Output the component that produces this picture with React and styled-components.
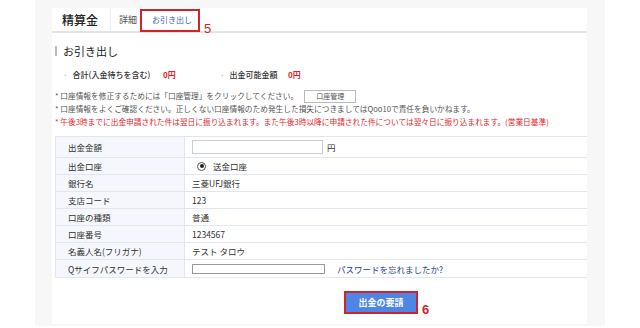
import styled, { createGlobalStyle } from 'styled-components'

const GlobalStyle = createGlobalStyle`
  body {
    margin: 0;
    background: #fff;
    font-family: "Noto Sans CJK JP", "Liberation Sans", sans-serif;
    color: #333;
  }
`;

const Page = styled.div`
  padding: 0 35px;
  width: 640px;
  height: 328px;
  box-sizing: border-box;
`;

const Outer = styled.div`
  background: #f7f7f7;
  padding: 8px 18px 2px 17px;
  height: 326px;
  box-sizing: border-box;
`;

const Panel = styled.div`
  background: #fff;
  height: 100%;
  display: flex;
  flex-direction: column;
`;

const TabBar = styled.div`
  display: flex;
  align-items: stretch;
  height: 23px;
  border-bottom: 2px solid #e4e4e4;
  padding-left: 10px;
`;

const Title = styled.div`
  font-size: 12px;
  font-weight: 500;
  color: #222;
  line-height: 23px;
  padding-right: 12px;
  border-right: 1px solid #eee;
`;

const Tab = styled.div`
  font-size: ${p => (p.$active ? 8 : 9)}px;
  line-height: 23px;
  padding: 0 7px 0 8px;
  color: ${p => (p.$active ? '#3a64c8' : '#555')};
  position: relative;
`;

const Mark = styled.div`
  position: absolute;
  border: 2px solid #d2232a;
  left: ${p => p.$l}px;
  top: ${p => p.$t}px;
  width: ${p => p.$w}px;
  height: ${p => p.$h}px;
  box-sizing: border-box;
`;

const MarkNum = styled.span`
  position: absolute;
  color: #d2232a;
  font-family: "Liberation Sans", sans-serif;
  font-size: 13px;
  left: ${p => p.$l}px;
  top: ${p => p.$t}px;
`;

const Body = styled.div`
  padding: 10px 0 0 3px;
  display: flex;
  flex-direction: column;
  flex: 1;
`;

const Section = styled.div`
  display: flex;
  align-items: center;
  gap: 6px;
  font-size: 11px;
  color: #222;
  height: 16px;
  &::before {
    content: '';
    width: 2px;
    height: 10px;
    background: #bbb;
  }
`;

const Summary = styled.div`
  display: flex;
  align-items: center;
  margin: 8px 0 0 8px;
  font-size: 8px;
  font-weight: 500;
  height: 14px;
  color: #333;
  white-space: nowrap;
`;

const SumLabel = styled.span`
  width: ${p => p.$w}px;
  flex: none;
  &::before {
    content: '·';
    color: #aaa;
    margin-right: 5px;
  }
`;

const Red = styled.span`
  color: #e0252a;
  font-weight: 700;
  width: ${p => p.$w}px;
`;

const Notes = styled.div`
  margin-top: 9px;
  font-size: 7.7px;
  color: #555;
  line-height: 12.5px;
`;

const Note = styled.div`
  display: flex;
  align-items: center;
  color: ${p => (p.$red ? '#e3262b' : '#555')};
`;

const SmallBtn = styled.span`
  display: inline-block;
  margin-left: 6px;
  border: 1px solid #bbb;
  background: #fff;
  font-size: 7px;
  padding: 0 10px;
  height: 11px;
  line-height: 11px;
  width: 30px;
  text-align: center;
`;

const Table = styled.div`
  margin-top: 8px;
  display: grid;
  grid-template-columns: 130px 1fr;
  border-top: 1px solid #e2e6f0;
  font-size: 8.5px;
`;

const Label = styled.div`
  background: #f5f7fc;
  padding-left: 12px;
  display: flex;
  align-items: center;
  height: ${p => p.$h || 16}px;
  border-bottom: 1px solid #e2e6f0;
  border-left: 1px solid #e2e6f0;
  border-right: 1px solid #e2e6f0;
  color: #333;
`;

const Value = styled.div`
  padding-left: 7px;
  display: flex;
  align-items: center;
  gap: 4px;
  height: ${p => p.$h || 16}px;
  border-bottom: 1px solid #e2e6f0;
  color: #333;
`;

const Input = styled.div`
  width: ${p => p.$w}px;
  height: ${p => p.$ih}px;
  border: 1px solid ${p => p.$dark ? '#999' : '#c8cdd6'};
  box-sizing: border-box;
  background: #fff;
`;

const Radio = styled.span`
  width: 9px;
  height: 9px;
  border: 1px solid #555;
  border-radius: 50%;
  box-sizing: border-box;
  display: inline-flex;
  align-items: center;
  justify-content: center;
  margin: 0 3px 0 5px;
  &::after {
    content: '';
    width: 4px;
    height: 4px;
    border-radius: 50%;
    background: #222;
  }
`;

const Link = styled.span`
  color: #2b3d9e;
  margin-left: 8px;
`;

const Footer = styled.div`
  display: flex;
  justify-content: center;
  padding-top: 13px;
  padding-left: 120px;
`;

const Submit = styled.div`
  position: relative;
  width: 74px;
  height: 23px;
  background: #4f86e6;
  border: 2px solid #d2232a;
  box-sizing: border-box;
  color: #fff;
  font-size: 9px;
  font-weight: 700;
  display: flex;
  align-items: center;
  justify-content: center;
`;

const rows = [
  ['支店コード', '123'],
  ['口座の種類', '普通'],
  ['口座番号', '1234567'],
  ['名義人名(フリガナ)', 'テスト タロウ'],
];

export default function App() {
  return (
    <Page>
      <GlobalStyle />
      <Outer>
        <Panel>
          <TabBar>
            <Title>精算金</Title>
            <Tab>詳細</Tab>
            <Tab $active>
              お引き出し
              <Mark $l={-4} $t={1} $w={60} $h={23} />
              <MarkNum $l={60} $t={9}>5</MarkNum>
            </Tab>
          </TabBar>
          <Body>
            <Section>お引き出し</Section>
            <Summary>
              <SumLabel $w={100}>合計(入金待ちを含む)</SumLabel>
              <Red $w={57}>0円</Red>
              <SumLabel $w={68}>出金可能金額</SumLabel>
              <Red>0円</Red>
            </Summary>
            <Notes>
              <Note>* 口座情報を修正するためには「口座管理」をクリックしてください。<SmallBtn>口座管理</SmallBtn></Note>
              <Note>* 口座情報をよくご確認ください。正しくない口座情報のため発生した損失につきましてはQoo10で責任を負いかねます。</Note>
              <Note $red>* 午後3時までに出金申請された件は翌日に振り込まれます。また午後3時以降に申請された件については翌々日に振り込まれます。(営業日基準)</Note>
            </Notes>
            <Table>
              <Label $h={20}>出金金額</Label>
              <Value $h={20}><Input $w={131} $ih={14} />円</Value>
              <Label>出金口座</Label>
              <Value><Radio />送金口座</Value>
              <Label>銀行名</Label>
              <Value>三菱UFJ銀行</Value>
              {rows.map(([l, v]) => (
                <>
                  <Label key={l}>{l}</Label>
                  <Value key={l + 'v'}>{v}</Value>
                </>
              ))}
              <Label $h={17}>Qサイフパスワードを入力</Label>
              <Value $h={17}><Input $w={133} $ih={10} $dark /><Link>パスワードを忘れましたか?</Link></Value>
            </Table>
            <Footer>
              <Submit>
                出金の要請
                <MarkNum $l={76} $t={9}>6</MarkNum>
              </Submit>
            </Footer>
          </Body>
        </Panel>
      </Outer>
    </Page>
  );
}
